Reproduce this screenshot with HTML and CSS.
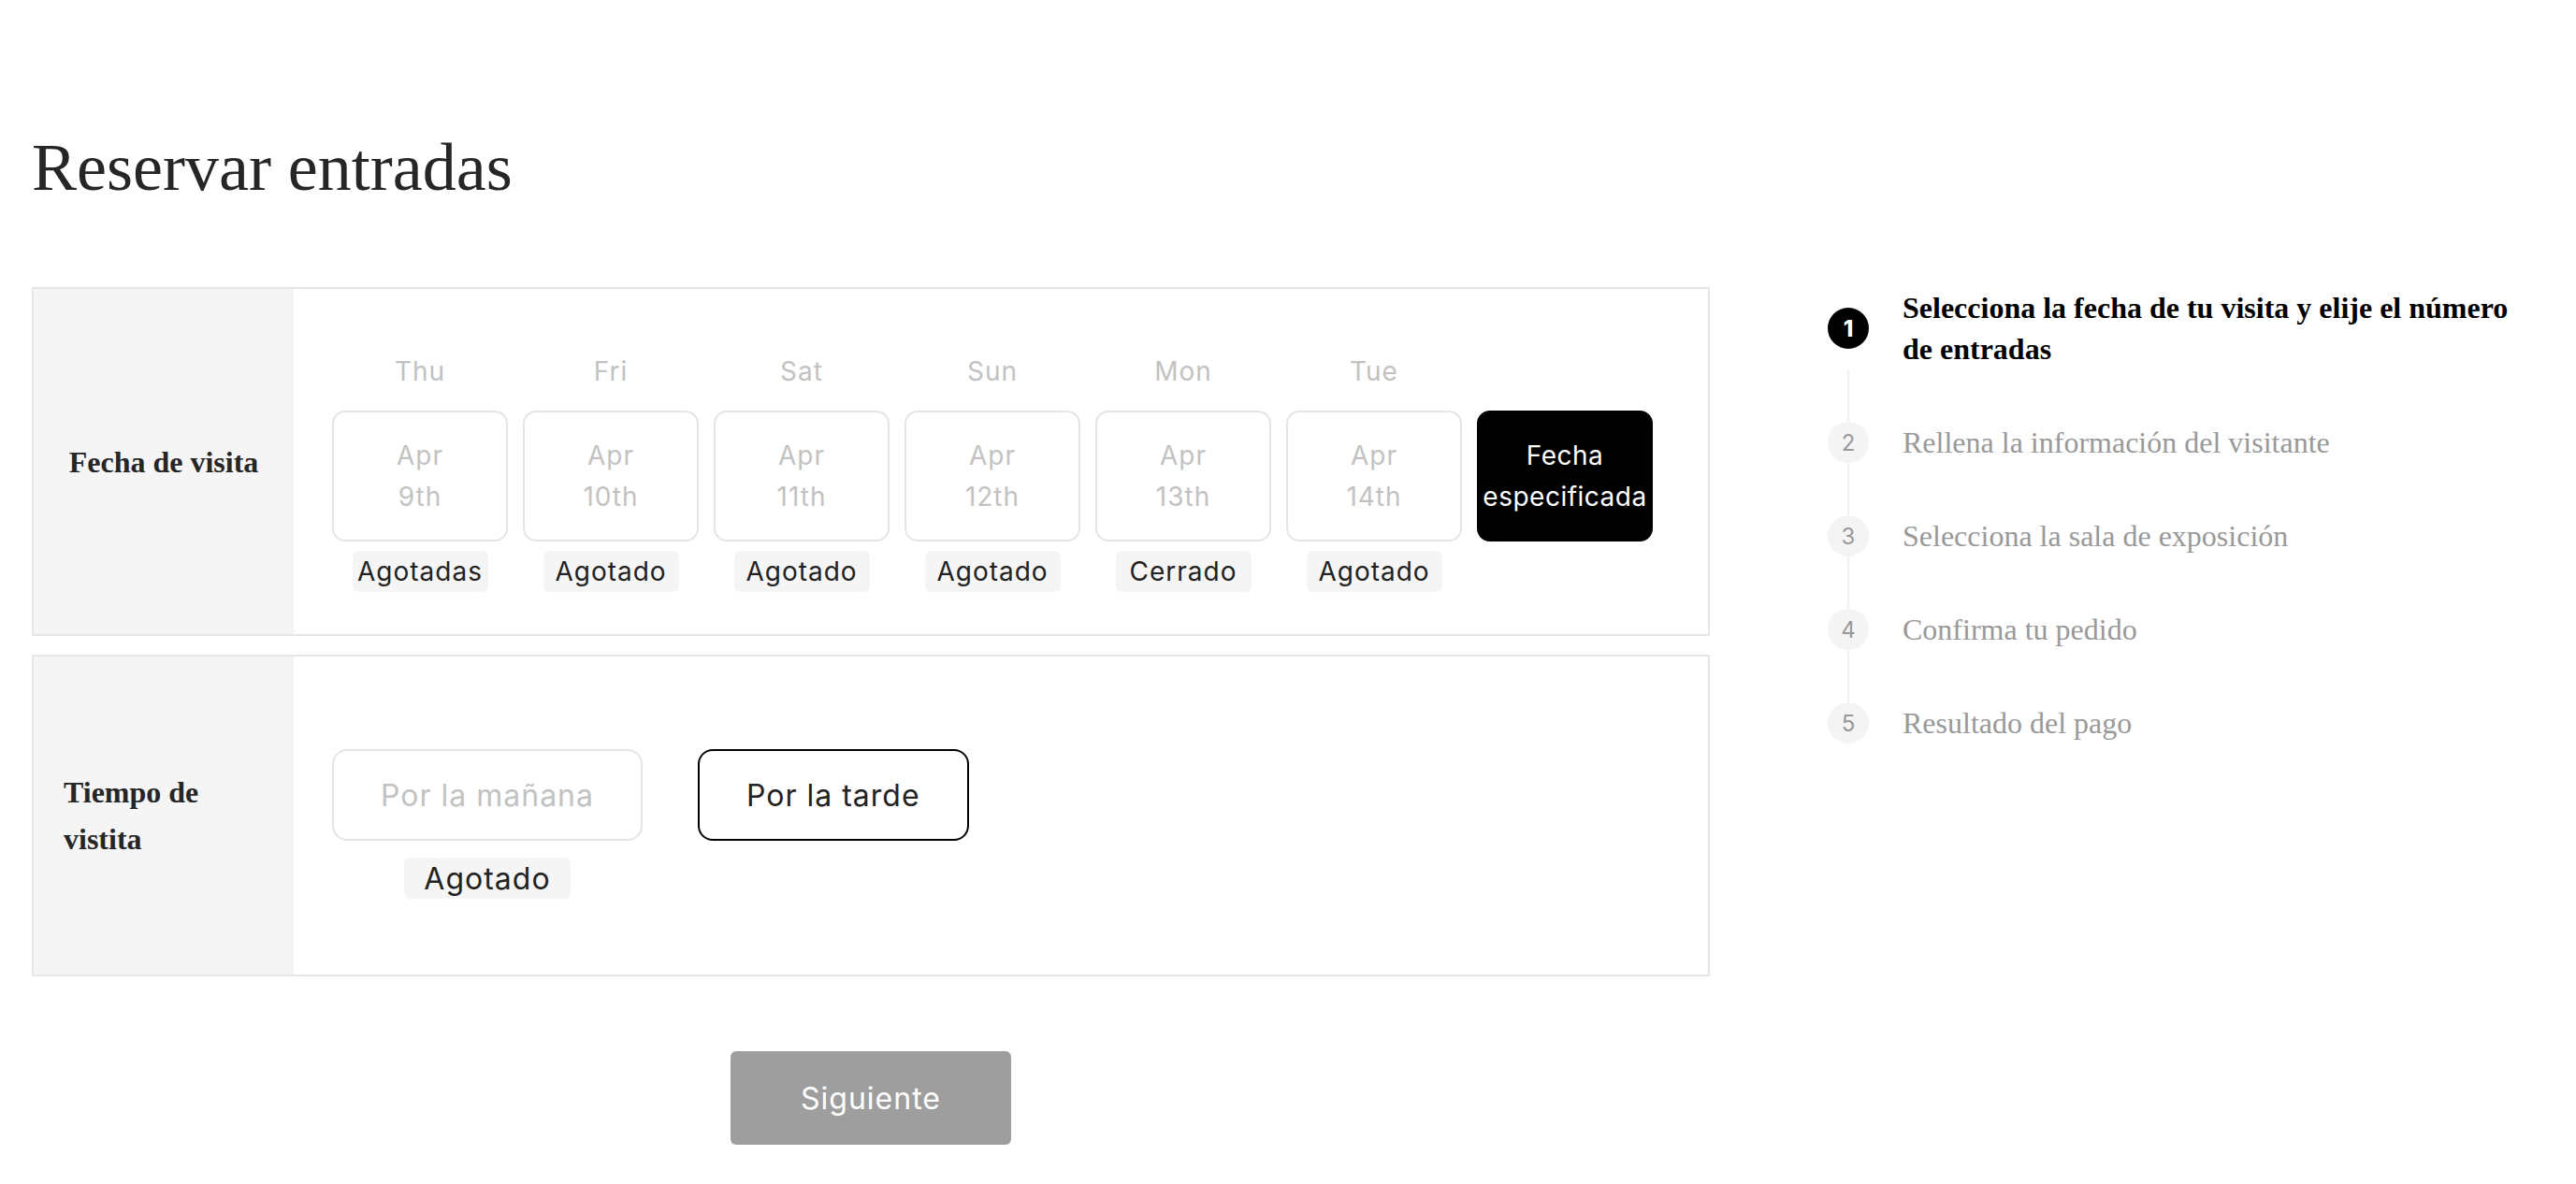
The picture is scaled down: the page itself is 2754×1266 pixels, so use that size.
FILE: index.html
```html
<!DOCTYPE html>
<html lang="es">
<head>
<meta charset="utf-8">
<title>Reservar entradas</title>
<link rel="stylesheet" href="styles.css">
</head>
<body>
<div class="page">
  <h1 class="title">Reservar entradas</h1>
  <div class="layout">
    <div class="form">
      <section class="panel">
        <div class="panel__label"><div class="panel__label-text">Fecha de visita</div></div>
        <div class="panel__body dates">
          <div class="date">
            <div class="date__day">Thu</div>
            <div class="date__card">Apr<br>9th</div>
            <div class="badge">Agotadas</div>
          </div>
          <div class="date">
            <div class="date__day">Fri</div>
            <div class="date__card">Apr<br>10th</div>
            <div class="badge">Agotado</div>
          </div>
          <div class="date">
            <div class="date__day">Sat</div>
            <div class="date__card">Apr<br>11th</div>
            <div class="badge">Agotado</div>
          </div>
          <div class="date">
            <div class="date__day">Sun</div>
            <div class="date__card">Apr<br>12th</div>
            <div class="badge">Agotado</div>
          </div>
          <div class="date">
            <div class="date__day">Mon</div>
            <div class="date__card">Apr<br>13th</div>
            <div class="badge">Cerrado</div>
          </div>
          <div class="date">
            <div class="date__day">Tue</div>
            <div class="date__card">Apr<br>14th</div>
            <div class="badge">Agotado</div>
          </div>
          <div class="date">
            <div class="date__day"></div>
            <div class="date__card date__card--active">Fecha<br>especificada</div>
          </div>
        </div>
      </section>
      <section class="panel">
        <div class="panel__label"><div class="panel__label-text">Tiempo de vistita</div></div>
        <div class="panel__body slots">
          <div class="slot">
            <div class="slot__btn">Por la mañana</div>
            <div class="badge badge--lg">Agotado</div>
          </div>
          <div class="slot">
            <div class="slot__btn slot__btn--selected">Por la tarde</div>
          </div>
        </div>
      </section>
      <div class="actions">
        <button class="next" type="button">Siguiente</button>
      </div>
    </div>
    <aside class="steps">
      <div class="step step--active">
        <div class="step__dot">1</div>
        <div class="step__text">Selecciona la fecha de tu visita y elije el número de entradas</div>
      </div>
      <div class="step__line"></div>
      <div class="step">
        <div class="step__dot">2</div>
        <div class="step__text">Rellena la información del visitante</div>
      </div>
      <div class="step__line"></div>
      <div class="step">
        <div class="step__dot">3</div>
        <div class="step__text">Selecciona la sala de exposición</div>
      </div>
      <div class="step__line"></div>
      <div class="step">
        <div class="step__dot">4</div>
        <div class="step__text">Confirma tu pedido</div>
      </div>
      <div class="step__line"></div>
      <div class="step">
        <div class="step__dot">5</div>
        <div class="step__text">Resultado del pago</div>
      </div>
    </aside>
  </div>
</div>
</body>
</html>
```

FILE: styles.css
```css
* {
  box-sizing: border-box;
}

body {
  margin: 0;
  background: #ffffff;
  font-family: "Liberation Serif", "Times New Roman", serif;
  color: #262626;
}

.page {
  padding: 0 34px;
}

.title {
  margin: 136px 0 85px;
  font-size: 72px;
  line-height: 86px;
  font-weight: 400;
  color: #262626;
}

.layout {
  display: flex;
  align-items: flex-start;
  gap: 126px;
}

.form {
  width: 1794px;
  flex: none;
}

.panel {
  display: flex;
  border: 2px solid #e6e6e6;
}

.panel + .panel {
  margin-top: 20px;
}

.panel__label {
  width: 278px;
  flex: none;
  background: #f5f5f5;
  display: flex;
  align-items: center;
  justify-content: center;
  padding: 0 32px;
}

.panel__label-text {
  font-weight: 700;
  font-size: 32px;
  line-height: 50px;
  color: #262626;
}

.panel__body {
  flex: 1;
  font-family: "Inter", "Liberation Sans", sans-serif;
  letter-spacing: 1px;
}

.dates {
  display: flex;
  gap: 16px;
  padding: 66px 59px 45px 41px;
}

.date {
  width: 188px;
  display: flex;
  flex-direction: column;
  align-items: center;
}

.date__day {
  height: 44px;
  line-height: 44px;
  font-size: 28px;
  color: #c2c2c2;
  margin-bottom: 20px;
}

.date__card {
  width: 188px;
  height: 140px;
  border: 2px solid #e5e5e5;
  border-radius: 14px;
  display: flex;
  align-items: center;
  justify-content: center;
  text-align: center;
  font-size: 28px;
  line-height: 44px;
  color: #c2c2c2;
}

.date__card--active {
  background: #000000;
  border-color: #000000;
  color: #ffffff;
  letter-spacing: 0.5px;
}

.badge {
  margin-top: 10px;
  height: 44px;
  max-width: 145px;
  padding: 0 20px;
  background: #f5f5f5;
  border-radius: 6px;
  display: flex;
  align-items: center;
  justify-content: center;
  font-size: 28px;
  color: #222222;
  white-space: nowrap;
}

.badge--lg {
  margin-top: 18px;
  max-width: none;
  padding: 0 21px;
  font-size: 32px;
}

.slots {
  display: flex;
  align-items: flex-start;
  gap: 59px;
  padding: 99px 0 81px 41px;
}

.slot {
  display: flex;
  flex-direction: column;
  align-items: center;
}

.slot__btn {
  height: 98px;
  padding: 0 50px;
  border: 2px solid #e5e5e5;
  border-radius: 16px;
  display: flex;
  align-items: center;
  font-size: 32px;
  color: #c2c2c2;
  white-space: nowrap;
}

.slot__btn--selected {
  border-color: #000000;
  color: #222222;
}

.actions {
  display: flex;
  justify-content: center;
  margin-top: 80px;
}

.next {
  width: 300px;
  height: 100px;
  border: 0;
  border-radius: 6px;
  background: #9e9e9e;
  color: #ffffff;
  font-family: "Inter", "Liberation Sans", sans-serif;
  font-size: 32px;
  letter-spacing: 1px;
  cursor: pointer;
}

.steps {
  flex: 1;
  display: flex;
  flex-direction: column;
}

.step {
  display: flex;
  align-items: center;
  gap: 36px;
}

.step__dot {
  width: 44px;
  height: 44px;
  flex: none;
  border-radius: 50%;
  background: #f4f4f4;
  color: #999999;
  display: flex;
  align-items: center;
  justify-content: center;
  font-family: "Inter", "Liberation Sans", sans-serif;
  font-size: 24px;
}

.step__text {
  font-size: 32px;
  line-height: 44px;
  color: #999999;
}

.step--active .step__dot {
  background: #000000;
  color: #ffffff;
  font-weight: 800;
}

.step--active .step__text {
  color: #000000;
  font-weight: 700;
}

.step__line {
  width: 2px;
  height: 56px;
  margin-left: 21px;
  background: #f0f0f0;
}
```
